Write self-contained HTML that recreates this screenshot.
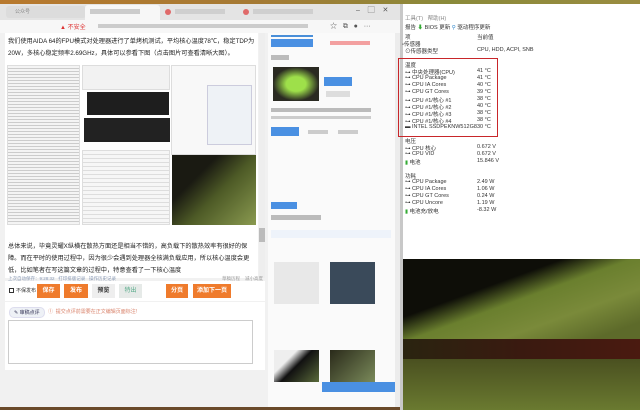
<!DOCTYPE html>
<html><head><meta charset="utf-8"><style>
*{margin:0;padding:0;box-sizing:border-box}
body{width:640px;height:410px;overflow:hidden;position:relative;background:#f3f3f3;font-family:"Liberation Sans","Noto Sans CJK SC",sans-serif;color:#333}
.a{position:absolute}
.t{font-size:7px;white-space:nowrap}
.p{position:absolute;left:8px;width:250px;font-size:6.2px;white-space:nowrap;color:#222;overflow:hidden}
.btn{position:absolute;top:284px;height:14px;font-size:6px;color:#fff;background:#ef7b2c;text-align:center;line-height:14px;font-weight:bold}
.r{position:absolute;left:405px;font-size:5.5px;white-space:nowrap;color:#333}
.v{position:absolute;left:477px;font-size:5.5px;white-space:nowrap;color:#333}
</style></head><body>
<div class="a" style="left:0;top:0;width:640px;height:4px;background:linear-gradient(90deg,#b8792e,#a57a34 40%,#8a8a3a 70%,#9a8c40)"></div>
<div class="a" style="left:0;top:4px;width:400px;height:16px;background:#e4e4e4"></div>
<div class="a" style="left:6px;top:6px;width:80px;height:12px;background:#dcdcdc;border-radius:3px"></div>
<div class="a t" style="left:15px;top:8px;font-size:5px;color:#888">公众号</div>
<div class="a" style="left:85px;top:5px;width:75px;height:15px;background:#f7f7f7;border-radius:3px 3px 0 0"></div>
<div class="a" style="left:90px;top:9px;width:50px;height:5px;background:#ccc"></div>
<div class="a" style="left:165px;top:9px;width:6px;height:6px;border-radius:50%;background:#e06a6a"></div>
<div class="a" style="left:175px;top:9px;width:50px;height:5px;background:#cfcfcf"></div>
<div class="a" style="left:243px;top:9px;width:6px;height:6px;border-radius:50%;background:#e06a6a"></div>
<div class="a" style="left:253px;top:9px;width:60px;height:5px;background:#cfcfcf"></div>
<div class="a t" style="left:356px;top:5px;font-size:7px;color:#555">–&nbsp;&nbsp;&nbsp;&nbsp;▢&nbsp;&nbsp;&nbsp;&nbsp;✕</div>
<div class="a" style="left:0;top:20px;width:400px;height:13px;background:#f7f7f7"></div>
<div class="a t" style="left:60px;top:22px;font-size:6px;color:#d33">▲ 不安全</div>
<div class="a" style="left:98px;top:24px;width:210px;height:4px;background:#ccc"></div>
<div class="a t" style="left:330px;top:21px;font-size:7px;color:#555">☆&nbsp;&nbsp;&nbsp;⧉&nbsp;&nbsp;&nbsp;●&nbsp;&nbsp;&nbsp;···</div>
<div class="a" style="left:0;top:33px;width:268px;height:374px;background:#f1f1f1"></div>
<div class="a" style="left:5px;top:33px;width:253px;height:245px;background:#fff"></div>
<div class="p" style="top:36px">我们使用AIDA 64的FPU模式对处理器进行了单烤机测试，平均核心温度78℃，稳定TDP为</div>
<div class="p" style="top:48px">20W，多核心稳定频率2.69GHz，具体可以参看下图（点击图片可查看清晰大图）。</div>
<div class="a" style="left:7px;top:65px;width:73px;height:160px;background:#f4f4f4;border:1px solid #ddd;background-image:repeating-linear-gradient(#f4f4f4 0 2px,#ccc 2px 3px)"></div>
<div class="a" style="left:82px;top:65px;width:88px;height:25px;background:#f2f2f2;border:1px solid #ddd"></div>
<div class="a" style="left:87px;top:92px;width:82px;height:23px;background:#1e1e1e"></div>
<div class="a" style="left:84px;top:118px;width:86px;height:24px;background:#222"></div>
<div class="a" style="left:82px;top:150px;width:88px;height:75px;background:#f6f6f6;border:1px solid #ddd;background-image:repeating-linear-gradient(#f6f6f6 0 3px,#ddd 3px 4px)"></div>
<div class="a" style="left:171px;top:65px;width:85px;height:90px;background:#f8f8f8;border:1px solid #ddd"></div>
<div class="a" style="left:207px;top:85px;width:45px;height:60px;background:#eef2f6;border:1px solid #ccd"></div>
<div class="a" style="left:172px;top:155px;width:84px;height:70px;background:linear-gradient(135deg,#1a1a12 30%,#4d5a26 55%,#8a9a50)"></div>
<div class="a" style="left:259px;top:33px;width:6px;height:245px;background:#eee"></div>
<div class="a" style="left:259px;top:228px;width:6px;height:14px;background:#bbb"></div>
<div class="p" style="top:241px">总体来说，毕竟灵耀X纵横在散热方面还是相当不错的，高负载下的散热效率有很好的保</div>
<div class="p" style="top:253px">障。而在平时的使用过程中，因为很少会遇到处理器全核满负载应用，所以核心温度会更</div>
<div class="p" style="top:265px">低，比如笔者在写这篇文章的过程中，特意查看了一下核心温度</div>
<div class="a t" style="left:8px;top:276px;font-size:4.5px;color:#8a9ab5">上次自动保存：9:28:32&nbsp;&nbsp;&nbsp;打印排版记录&nbsp;&nbsp;&nbsp;操作历史记录</div>
<div class="a t" style="left:222px;top:276px;font-size:4.5px;color:#999">草稿历程&nbsp;&nbsp;&nbsp;&nbsp;减小高度</div>
<div class="a" style="left:5px;top:281px;width:260px;height:20px;background:#fff"></div>
<div class="a" style="left:9px;top:288px;width:5px;height:5px;border:1px solid #333"></div>
<div class="a t" style="left:16px;top:287px;font-size:5px;color:#333">不保发布</div>
<div class="btn" style="left:37px;width:23px">保存</div>
<div class="btn" style="left:64px;width:24px">发布</div>
<div class="btn" style="left:92px;width:23px;background:#eee;color:#333">预览</div>
<div class="btn" style="left:119px;width:23px;background:#e6eae8;color:#5a8;font-weight:normal">特出</div>
<div class="btn" style="left:166px;width:22px">分页</div>
<div class="btn" style="left:193px;width:38px">添加下一页</div>
<div class="a" style="left:5px;top:302px;width:260px;height:68px;background:#fff"></div>
<div class="a t" style="left:9px;top:307px;font-size:5px;color:#335;background:#eef1f6;border:1px solid #dde;border-radius:5px;padding:1px 4px">✎ 审稿点评</div>
<div class="a t" style="left:48px;top:308px;font-size:5px;color:#d9826a">①&nbsp;&nbsp;提交点评前需要在正文编辑页面标注!</div>
<div class="a" style="left:8px;top:320px;width:245px;height:44px;border:1px solid #ccc;background:#fff"></div>
<div class="a" style="left:268px;top:33px;width:127px;height:374px;background:#fafafa"></div>
<div class="a" style="left:271px;top:35px;width:42px;height:2px;background:#4a8fd8"></div>
<div class="a" style="left:271px;top:39px;width:42px;height:8px;background:#4a90e2"></div>
<div class="a" style="left:330px;top:41px;width:40px;height:4px;background:#f3a0a0"></div>
<div class="a" style="left:271px;top:55px;width:18px;height:5px;background:#bbb"></div>
<div class="a" style="left:273px;top:67px;width:46px;height:34px;background:radial-gradient(#9ee04a 30%,#2a2a22 70%)"></div>
<div class="a" style="left:324px;top:77px;width:28px;height:9px;background:#4a90e2"></div>
<div class="a" style="left:326px;top:91px;width:24px;height:6px;background:#ddd"></div>
<div class="a" style="left:271px;top:108px;width:100px;height:4px;background:#bbb"></div>
<div class="a" style="left:271px;top:116px;width:100px;height:3px;background:#ccc"></div>
<div class="a" style="left:271px;top:127px;width:28px;height:9px;background:#4a90e2"></div>
<div class="a" style="left:308px;top:130px;width:20px;height:4px;background:#ccc"></div>
<div class="a" style="left:338px;top:130px;width:20px;height:4px;background:#ccc"></div>
<div class="a" style="left:271px;top:202px;width:26px;height:7px;background:#4a90e2"></div>
<div class="a" style="left:271px;top:215px;width:50px;height:5px;background:#bbb"></div>
<div class="a" style="left:271px;top:230px;width:120px;height:8px;background:#eef3fa"></div>
<div class="a" style="left:274px;top:262px;width:45px;height:42px;background:#e8e8e8"></div>
<div class="a" style="left:330px;top:262px;width:45px;height:42px;background:#3a4a5a"></div>
<div class="a" style="left:274px;top:350px;width:45px;height:32px;background:linear-gradient(135deg,#eee 30%,#111 50%,#5a6a3a)"></div>
<div class="a" style="left:330px;top:350px;width:45px;height:32px;background:linear-gradient(135deg,#2a2a1a,#7a8a5a)"></div>
<div class="a" style="left:322px;top:382px;width:73px;height:10px;background:#4a90e2"></div>
<div class="a" style="left:395px;top:33px;width:5px;height:374px;background:#ececec"></div>
<div class="a" style="left:0;top:407px;width:402px;height:3px;background:#6a4a2a"></div>
<div class="a" style="left:400px;top:4px;width:240px;height:256px;background:#fff"></div>
<div class="a" style="left:400px;top:4px;width:3px;height:406px;background:#c8c8c8"></div>
<div class="r" style="top:14px;color:#888">工具(T)&nbsp;&nbsp;&nbsp;帮助(H)</div>
<div class="r" style="top:23px">报告 <span style="color:#3a3">⬇</span> BIOS 更新 <span style="color:#38c">⚲</span> 驱动程序更新</div>
<div class="r" style="top:33px">项</div><div class="v" style="top:33px">当前值</div>
<div class="r" style="top:40px;left:402px">▫传感器</div>
<div class="r" style="top:47px">⊙传感器类型</div><div class="v" style="top:47px">CPU, HDD, ACPI, SNB</div>
<div class="r" style="top:61px">温度</div>
<div class="r" style="top:68px">⊶ 中央处理器(CPU)</div><div class="v" style="top:68px">41 °C</div>
<div class="r" style="top:75px">⊶ CPU Package</div><div class="v" style="top:75px">41 °C</div>
<div class="r" style="top:82px">⊶ CPU IA Cores</div><div class="v" style="top:82px">40 °C</div>
<div class="r" style="top:89px">⊶ CPU GT Cores</div><div class="v" style="top:89px">39 °C</div>
<div class="r" style="top:96px">⊶ CPU #1/核心 #1</div><div class="v" style="top:96px">38 °C</div>
<div class="r" style="top:103px">⊶ CPU #1/核心 #2</div><div class="v" style="top:103px">40 °C</div>
<div class="r" style="top:110px">⊶ CPU #1/核心 #3</div><div class="v" style="top:110px">38 °C</div>
<div class="r" style="top:117px">⊶ CPU #1/核心 #4</div><div class="v" style="top:117px">38 °C</div>
<div class="r" style="top:124px">▬ INTEL SSDPEKNW512G8</div><div class="v" style="top:124px">30 °C</div>
<div class="a" style="left:398px;top:58px;width:100px;height:79px;border:1px solid #c8262a"></div>
<div class="r" style="top:137px">电压</div>
<div class="r" style="top:144px">⊶ CPU 核心</div><div class="v" style="top:144px">0.672 V</div>
<div class="r" style="top:151px">⊶ CPU VID</div><div class="v" style="top:151px">0.672 V</div>
<div class="r" style="top:158px"><span style="color:#3a3">▮</span> 电池</div><div class="v" style="top:158px">15.846 V</div>
<div class="r" style="top:172px">功耗</div>
<div class="r" style="top:179px">⊶ CPU Package</div><div class="v" style="top:179px">2.49 W</div>
<div class="r" style="top:186px">⊶ CPU IA Cores</div><div class="v" style="top:186px">1.06 W</div>
<div class="r" style="top:193px">⊶ CPU GT Cores</div><div class="v" style="top:193px">0.24 W</div>
<div class="r" style="top:200px">⊶ CPU Uncore</div><div class="v" style="top:200px">1.19 W</div>
<div class="r" style="top:207px"><span style="color:#3a3">▮</span> 电池充/放电</div><div class="v" style="top:207px">-8.32 W</div>
<div class="a" style="left:403px;top:259px;width:237px;height:80px;background:linear-gradient(160deg,#0e0e08 35%,#6a7f2e 50%,#7a8a3a 70%,#5d6a2a 90%)"></div>
<div class="a" style="left:403px;top:339px;width:237px;height:20px;background:linear-gradient(90deg,#2a2410,#3a1a10 50%,#4a1a10)"></div>
<div class="a" style="left:403px;top:359px;width:237px;height:51px;background:linear-gradient(180deg,#4a5020,#6a7a30)"></div>
</body></html>
